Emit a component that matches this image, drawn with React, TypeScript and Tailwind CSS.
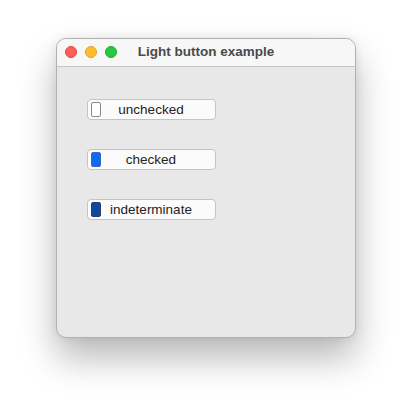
import React from "react";

type State = "unchecked" | "checked" | "indeterminate";

function LightButton({ label, state }: { label: string; state: State }) {
  const ind =
    state === "checked"
      ? "bg-[#0a6cf5] border-[#3a6db8]"
      : state === "indeterminate"
      ? "bg-[#0b4a9e] border-[#2a3f66]"
      : "bg-white border-[#8a8a8a]";
  return (
    <div className="relative w-[129px] h-[21px] rounded-[4px] border border-[#c4c4c4] bg-[#fbfbfb] flex items-center justify-center">
      <div className={`absolute left-[3px] top-[2px] w-[10px] h-[15px] rounded-[2px] border ${ind}`} />
      <span className="text-[13.5px] leading-none text-[#222] pr-[1px]" style={{ fontFamily: '"Liberation Sans", Arial, sans-serif' }}>
        {label}
      </span>
    </div>
  );
}

export default function App() {
  return (
    <div className="w-[412px] h-[412px] bg-white pt-[38px] pl-[56px]">
      <div className="w-[300px] h-[300px] rounded-[10px] border border-[#b0b0b0] bg-[#e8e8e8] overflow-hidden shadow-[0_20px_36px_rgba(0,0,0,0.28),0_0_10px_rgba(0,0,0,0.08)] flex flex-col">
        <div className="h-[28px] bg-[#f7f7f7] border-b border-[#c6c6c6] relative flex items-center justify-center shrink-0">
          <div className="absolute left-[8px] top-[7px] flex gap-[8px]">
            <div className="w-[12px] h-[12px] rounded-full bg-[#fe5f57] border border-[#e0443e]" />
            <div className="w-[12px] h-[12px] rounded-full bg-[#febc2e] border border-[#dea123]" />
            <div className="w-[12px] h-[12px] rounded-full bg-[#28c840] border border-[#1aab29]" />
          </div>
          <span className="text-[13.5px] font-bold text-[#4a4a4a]" style={{ fontFamily: '"Liberation Sans", Arial, sans-serif' }}>
            Light button example
          </span>
        </div>
        <div className="flex flex-col gap-[29px] pt-[32px] pl-[30px]">
          <LightButton label="unchecked" state="unchecked" />
          <LightButton label="checked" state="checked" />
          <LightButton label="indeterminate" state="indeterminate" />
        </div>
      </div>
    </div>
  );
}
